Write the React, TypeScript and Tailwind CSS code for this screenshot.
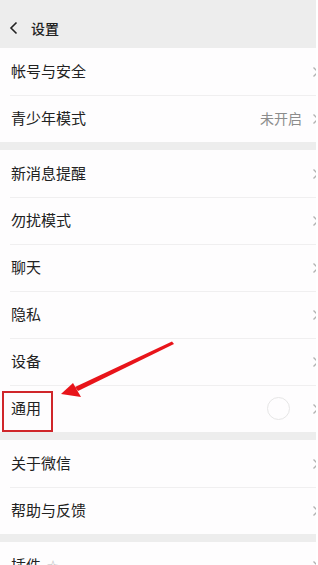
import React from 'react'

const font = { fontFamily: '"Noto Sans CJK SC", "Noto Sans", sans-serif' }

function Chevron() {
  return (
    <svg width="8" height="12" viewBox="0 0 8 12" className="-mr-[4px] shrink-0">
      <path d="M1.5 1.5 L6 6 L1.5 10.5" fill="none" stroke="#b2b2b2" strokeWidth="1.3" />
    </svg>
  )
}

type Item = { label: string; value?: string; circle?: boolean; star?: boolean }

function Row({ item, first }: { item: Item; first: boolean }) {
  return (
    <div className="relative h-[47px] flex items-center justify-between pl-[11px] pr-0 bg-[#fefdfe]">
      {!first && <div className="absolute top-0 left-[10px] right-0 h-px bg-[#f0eff0]" />}
      <div className="flex items-center gap-[6px] text-[15px] text-[#222]">
        {item.label}
        {item.star && <span className="text-[12px] text-[#bbb]">☆</span>}
      </div>
      <div className="flex items-center">
        {item.value && <span className="text-[14px] text-[#8c8c8c] mr-[10px]">{item.value}</span>}
        {item.circle && <div className="w-[23px] h-[23px] rounded-full border-[1.5px] border-[#e6e6e6] mr-[22px]" />}
        <Chevron />
      </div>
    </div>
  )
}

function Group({ items }: { items: Item[] }) {
  return (
    <div>
      {items.map((it, i) => (
        <Row key={it.label} item={it} first={i === 0} />
      ))}
    </div>
  )
}

export default function App() {
  return (
    <div className="relative w-[318px] h-[565px] overflow-hidden bg-white" style={font}>
      <div className="w-[316px] h-full overflow-hidden bg-[#ededed]">
        <div className="h-[48px] flex items-center pl-[9px] pt-[8px]">
          <svg width="10" height="14" viewBox="0 0 10 14">
            <path d="M7.5 1.5 L2 7 L7.5 12.5" fill="none" stroke="#222" strokeWidth="1.6" />
          </svg>
          <span className="ml-[12px] text-[14px] font-medium text-[#222]">设置</span>
        </div>
        <Group items={[{ label: '帐号与安全' }, { label: '青少年模式', value: '未开启' }]} />
        <div className="h-[8px]" />
        <Group
          items={[
            { label: '新消息提醒' },
            { label: '勿扰模式' },
            { label: '聊天' },
            { label: '隐私' },
            { label: '设备' },
            { label: '通用', circle: true },
          ]}
        />
        <div className="h-[8px]" />
        <Group items={[{ label: '关于微信' }, { label: '帮助与反馈' }]} />
        <div className="h-[8px]" />
        <Group items={[{ label: '插件', star: true }]} />
      </div>

      {/* red highlight box */}
      <div className="absolute left-[2px] top-[391px] w-[51px] h-[41px] border-2 border-[#d0262a]" />

      {/* red arrow */}
      <svg className="absolute left-0 top-0" width="318" height="565" viewBox="0 0 318 565">
        <polygon points="172,341.5 174,344 78,391 75,387" fill="#e8141a" />
        <polygon points="61,394 73,383 81,397" fill="#e8141a" />
      </svg>
    </div>
  )
}
